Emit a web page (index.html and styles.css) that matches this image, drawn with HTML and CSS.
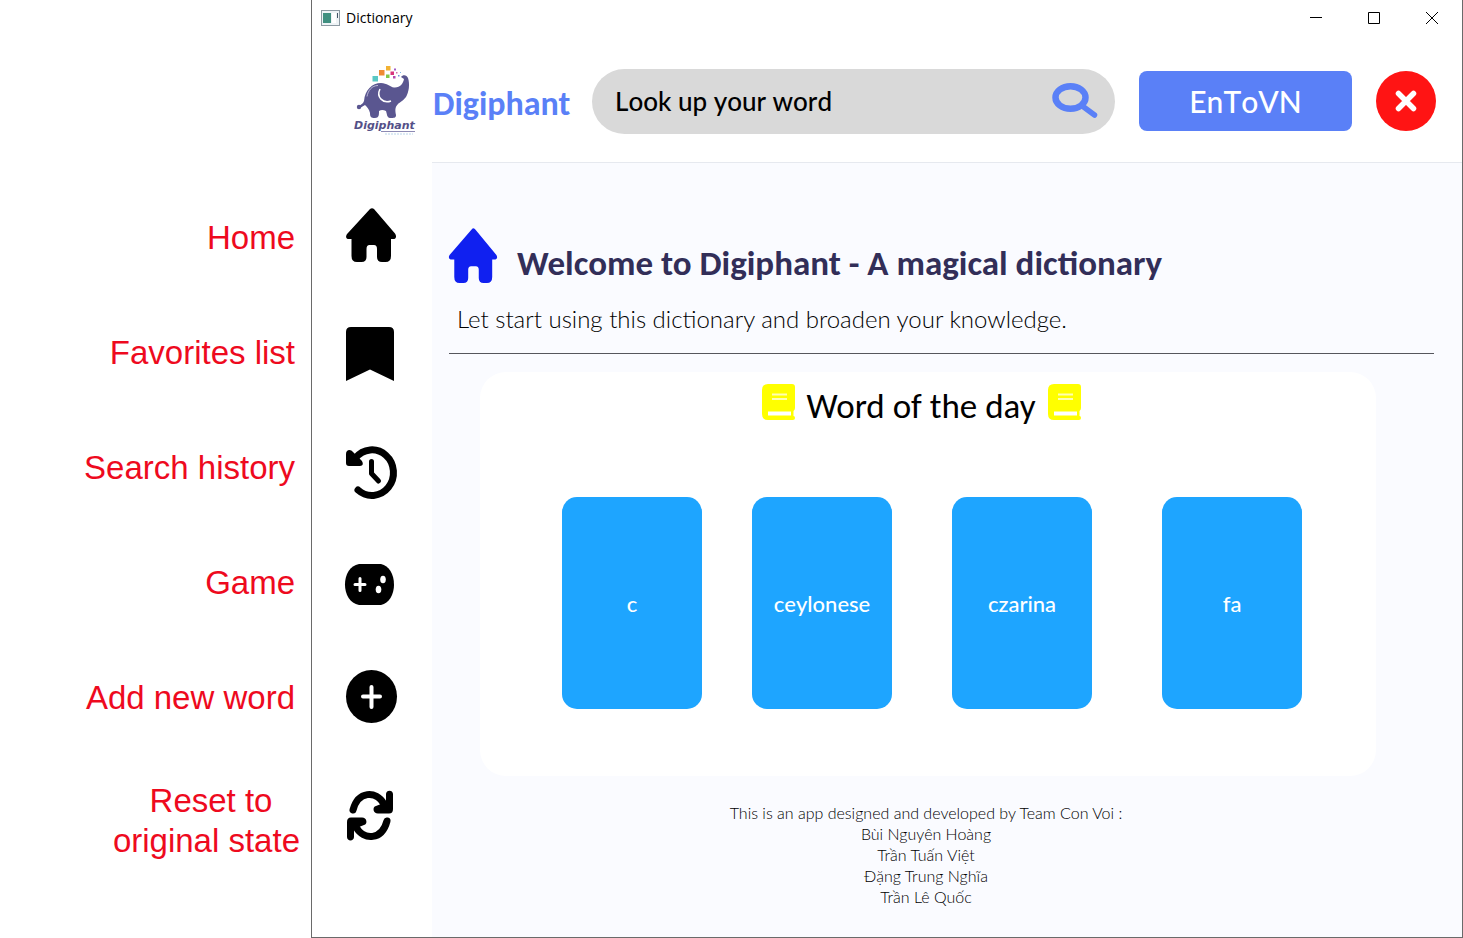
FILE: index.html
```html
<!DOCTYPE html>
<html lang="en">
<head>
<meta charset="utf-8">
<title>Dictionary</title>
<link rel="stylesheet" href="styles.css">
</head>
<body>
<div class="page">
  <ul class="notes">
    <li class="note">Home</li>
    <li class="note">Favorites list</li>
    <li class="note">Search history</li>
    <li class="note">Game</li>
    <li class="note">Add new word</li>
    <li class="note note-tall">&nbsp;Reset to<br>original state</li>
  </ul>
  <div class="window">
    <div class="titlebar">
      <svg class="app-icon" viewBox="0 0 19 16" width="19" height="16"><rect x=".5" y=".5" width="18" height="15" fill="#eef3f6" stroke="#8d9aa3"/><rect x="2" y="3" width="8" height="10" fill="#3f8f80"/><rect x="11" y="3" width="4" height="10" fill="#fff"/><path d="M16.500 3v5" stroke="#456"/></svg>
      <span class="app-title">Dictionary</span>
      <button class="win-btn" aria-label="Minimize"><svg viewBox="0 0 12 12" width="12" height="12"><path d="M0 5.500h12" stroke="#000"/></svg></button>
      <button class="win-btn" aria-label="Maximize"><svg viewBox="0 0 12 12" width="12" height="12"><path d="M.5.5h11v11H.5z" stroke="#000" fill="none"/></svg></button>
      <button class="win-btn" aria-label="Close window"><svg viewBox="0 0 12 12" width="12" height="12"><path d="M0 0l12 12M12 0L0 12" stroke="#000"/></svg></button>
    </div>
    <header class="header">
      <div class="logo">
        <svg viewBox="0 0 64 72" width="64" height="72" role="img" aria-label="Digiphant logo">
          <path fill="#5a5690" d="M10 36C11 25 18 18 27 18C33 18 36 22 40 22.500C46 23 49 19 50 14L47 12C49 9 53 10 54 13C56 19 55 27 52 32C49 36 46 37 44 39C41 42 41 45 42 50C42 53 40 53 36 53C33 53 33 49 32 46Q28 44 25 46C25 50 25 53 21 53C17 53 16 52 16 48C15 44 13 42 11 40L6 43L4 42L9 38Z"/>
          <circle cx="5" cy="42" r="2.200" fill="#5a5690"/>
          <path d="M26 24c-4 8 3 15 11 12" fill="none" stroke="#fff" stroke-width="1.500"/>
          <path d="M24 20.500c-6 0-10 5-11 11" fill="none" stroke="#b9b7d6" stroke-width="1"/>
          <rect x="18.500" y="11" width="5.500" height="5.500" fill="#5ac8c4"/>
          <rect x="25" y="5" width="5.500" height="5.500" fill="#ef8b32"/>
          <rect x="32" y="1" width="4.500" height="4.500" fill="#f2b233"/>
          <rect x="32" y="9.500" width="3.500" height="3.500" fill="#83c848"/>
          <rect x="36.500" y="6.500" width="3.500" height="3.500" fill="#d8357c"/>
          <rect x="39" y="11" width="2.500" height="2.500" fill="#b34bb0"/>
          <rect x="40" y="3.500" width="2" height="2" fill="#a05cc8"/>
          <rect x="42" y="7" width="1.500" height="1.500" fill="#d16fae"/>
          <rect x="44" y="10" width="1.500" height="1.500" fill="#6f8edc"/>
          <rect x="46" y="7" width="1" height="1" fill="#7db8e8"/>
          <text class="logo-word" x="0" y="64">Digiphant</text>
          <path d="M27 66.500h34" stroke="#8d8ab4" stroke-width="1"/>
          <path d="M31 69h28" stroke="#b9d5ea" stroke-width="1" stroke-dasharray="2 1"/>
        </svg>
      </div>
      <div class="brand">Digiphant</div>
      <form class="search">
        <input class="search-input" type="text" aria-label="Search word" value="Look up your word">
        <button class="search-btn" type="button" aria-label="Search"><svg viewBox="0 0 46 36" width="46" height="36" fill="none" stroke="#5a80f7"><ellipse cx="18.500" cy="14.500" rx="15" ry="11.300" stroke-width="6.500"/><path d="M31 23.500l11.500 8.500" stroke-width="5.500" stroke-linecap="round"/></svg></button>
      </form>
      <button class="lang">EnToVN</button>
      <button class="close" aria-label="Close"><svg viewBox="0 0 22 22" width="22" height="22"><path d="M3.500 3.500l15 15M18.500 3.500l-15 15" stroke="#fff" stroke-width="5.500" stroke-linecap="round"/></svg></button>
    </header>
    <div class="body">
      <nav class="sidebar">
        <button class="nav-btn" aria-label="Home"><svg viewBox="0 0 50 54" width="50" height="54"><path d="M24 1Q26 -.6 28 1L49 25.500C51 28.500 50 31 47 31H45V48Q45 54 39.500 54H36Q31 54 31 49V41Q31 37 28 37H23.500Q20.500 37 20.500 41V49Q20.500 54 15.500 54H11Q5.500 54 5.500 48V31H3C0 31-1 28.500 1.500 25.500Z"/></svg></button>
        <button class="nav-btn" aria-label="Favorites list"><svg viewBox="0 0 48 54" width="48" height="54"><path d="M5 0H43Q48 0 48 5V54L24 42.500L0 54V5Q0 0 5 0Z"/></svg></button>
        <button class="nav-btn" aria-label="Search history"><svg viewBox="0 0 51 53" width="51" height="53"><path d="M9.500 12A21.500 22.800 0 1 1 12 44" fill="none" stroke="#000" stroke-width="7" stroke-linecap="round"/><path d="M0 8C0 3 5 3 7 6L15 14C18 17 17 20 14 20H3Q0 20 0 17Z"/><path d="M25.500 15.500V27.500L32.500 35" fill="none" stroke="#000" stroke-width="5" stroke-linecap="round" stroke-linejoin="round"/></svg></button>
        <button class="nav-btn" aria-label="Game"><svg viewBox="1 0 49 41" width="49" height="41"><path d="M14 0H36C44 2 49 10 49 20.500S44 39 36 41H14C5 39 0 31 0 20.500S5 2 14 0Z"/><path d="M15 14.500v12M10 20.500h10" stroke="#fff" stroke-width="3" stroke-linecap="round"/><ellipse cx="38" cy="15.500" rx="2.800" ry="3.800" fill="#fff"/><ellipse cx="33.500" cy="25.500" rx="2.800" ry="3.800" fill="#fff"/></svg></button>
        <button class="nav-btn" aria-label="Add new word"><svg viewBox="0 0 51 53" width="51" height="53"><ellipse cx="25.500" cy="26.500" rx="25.500" ry="26.500"/><path d="M25.500 17v20M17 26.500h17" stroke="#fff" stroke-width="4" stroke-linecap="round"/></svg></button>
        <button class="nav-btn" aria-label="Reset to original state"><svg viewBox="-1 -2 47 53" width="47" height="53"><g id="arrow"><path d="M6 20C11 1 29 0 37 14" fill="none" stroke="#000" stroke-width="7" stroke-linecap="round"/><path d="M29 16L39 12V4C39 -.5 46 -.5 46 4V19Q46 23.500 42 23.500H31C26 23.500 25 17 29 16Z"/></g><use href="#arrow" transform="rotate(180 23 25.500)"/></svg></button>
      </nav>
      <main class="main">
        <div class="welcome">
          <svg viewBox="0 0 50 54" width="48" height="55" preserveAspectRatio="none"><path fill="#1020f0" d="M24 1Q25 -.6 27 1L48.500 25.500C51.500 28.500 50 31 47 31H45V48Q45 54 39.500 54H36Q31 54 31 49V41Q31 37.500 28 37.500H23Q20 37.500 20 41V49Q20 54 15 54H11Q5.500 54 5.500 48V31H3C0 31-1.500 28.500 1.500 25.500Z"/></svg>
          <h1 class="welcome-title">Welcome to Digiphant - A magical dictionary</h1>
        </div>
        <p class="intro">Let start using this dictionary and broaden your knowledge.</p>
        <section class="panel">
          <div class="panel-head">
            <svg viewBox="0 0 33 36" width="33" height="36"><path fill="#ff0" d="M6 0H30Q33 0 33 3V24Q33 26 31.500 27V32Q33 32 33 34T31 36H6Q0 36 0 30V6Q0 0 6 0Z"/><path d="M10 10.500h15M10 15h15" stroke="#ffffb4" stroke-width="2"/><path d="M6 29.500h23" stroke="#fff" stroke-width="4"/></svg>
            <h2 class="panel-title">Word of the day</h2>
            <svg viewBox="0 0 33 36" width="33" height="36"><path fill="#ff0" d="M6 0H30Q33 0 33 3V24Q33 26 31.500 27V32Q33 32 33 34T31 36H6Q0 36 0 30V6Q0 0 6 0Z"/><path d="M10 10.500h15M10 15h15" stroke="#ffffb4" stroke-width="2"/><path d="M6 29.500h23" stroke="#fff" stroke-width="4"/></svg>
          </div>
          <div class="cards">
            <button class="card">c</button>
            <button class="card">ceylonese</button>
            <button class="card">czarina</button>
            <button class="card">fa</button>
          </div>
        </section>
        <footer class="credits">This is an app designed and developed by Team Con Voi :<br>Bùi Nguyên Hoàng<br>Trần Tuấn Việt<br>Đặng Trung Nghĩa<br>Trần Lê Quốc</footer>
      </main>
    </div>
  </div>
</div>
</body>
</html>
```
FILE: styles.css
```css
* { box-sizing: border-box; }
body {
  margin: 0;
  background: #fff;
  color: #000;
  font-family: Carlito, Lato, sans-serif;
}
button {
  border: 0;
  padding: 0;
  background: none;
  font-family: Lato, sans-serif;
  font-kerning: none;
  cursor: pointer;
}
svg { display: block; flex: none; overflow: visible; }
.page {
  display: grid;
  grid-template-columns: 311px 1fr;
  min-height: 100vh;
}
.notes {
  margin: 0;
  padding: 180px 16px 0 0;
  list-style: none;
  color: #ee0a1e;
  font: 33px/40px "Liberation Sans", sans-serif;
}
.note {
  display: flex;
  align-items: center;
  justify-content: flex-end;
  height: 115px;
}
.note-tall {
  height: 132px;
  margin-right: -5px;
  text-align: center;
}
.window {
  display: flex;
  flex-direction: column;
  border: 1px solid #6a6a6a;
  border-top: 0;
}
.titlebar {
  display: flex;
  align-items: center;
  height: 36px;
  padding: 0 1px 0 9px;
}
.app-title {
  flex: 1;
  margin-left: 6px;
  font: 14px/20px "Open Sans", sans-serif;
}
.win-btn {
  display: grid;
  place-items: center;
  width: 58px;
  height: 36px;
}
.header {
  display: flex;
  align-items: center;
  height: 126px;
  padding: 4px 26px 0 42px;
}
.logo { width: 79px; }
.logo-word {
  font: italic bold 11px "DejaVu Sans", sans-serif;
  fill: #545088;
}
.brand {
  width: 159px;
  padding-top: 6px;
  color: #5a80f7;
  font-size: 34px;
  font-weight: 700;
  line-height: 40px;
}
.search {
  display: flex;
  align-items: center;
  flex: 1;
  height: 65px;
  padding: 0 17px 0 23px;
  border-radius: 33px;
  background: #d9d9d9;
}
.search-input {
  flex: 1;
  min-width: 0;
  padding: 0;
  border: 0;
  outline: 0;
  background: none;
  color: #000;
  font: 500 26px/32px Lato, sans-serif;
  font-kerning: none;
}
.lang {
  width: 213px;
  height: 60px;
  margin: 0 24px;
  border-radius: 8px;
  background: #5a80f7;
  color: #fff;
  font-size: 30px;
  font-weight: 500;
}
.close {
  display: grid;
  place-items: center;
  width: 60px;
  height: 60px;
  border-radius: 50%;
  background: #ff1414;
}
.body {
  display: grid;
  grid-template-columns: 120px 1fr;
  flex: 1;
}
.sidebar {
  display: flex;
  flex-direction: column;
  align-items: flex-start;
  gap: 65px;
  padding: 46px 0 0 34px;
}
.main {
  padding: 64px 28px 28px 17px;
  border-top: 1px solid #e6e9ef;
  background: #fafbff;
}
.welcome {
  display: flex;
  align-items: center;
  gap: 20px;
}
.welcome-title {
  margin: 0;
  padding-top: 16px;
  color: #322e58;
  font-size: 35px;
  font-weight: 900;
  line-height: 40px;
}
.intro {
  margin: 0;
  padding: 18px 8px 16px;
  border-bottom: 1px solid #55565c;
  font-family: Lato, sans-serif;
  font-size: 24px;
  font-weight: 300;
  line-height: 36px;
}
.panel {
  min-height: 404px;
  margin: 18px 58px 26px 31px;
  padding: 12px 74px 0 82px;
  border-radius: 26px;
  background: #fff;
}
.panel-head {
  display: flex;
  justify-content: center;
  gap: 12px;
  margin-right: 22px;
}
.panel-title {
  margin: 0;
  font-size: 35px;
  font-weight: 400;
  line-height: 44px;
}
.cards {
  display: grid;
  grid-template-columns: 190fr 200fr 210fr 140fr;
  margin-top: 69px;
}
.card {
  width: 140px;
  height: 212px;
  border-radius: 15px;
  background: #1ea5ff;
  color: #fff;
  font-size: 22px;
  font-weight: 500;
}
.credits {
  margin: 0 62px 0 31px;
  text-align: center;
  font-family: Lato, sans-serif;
  font-size: 16px;
  font-weight: 300;
  line-height: 21px;
}
```
